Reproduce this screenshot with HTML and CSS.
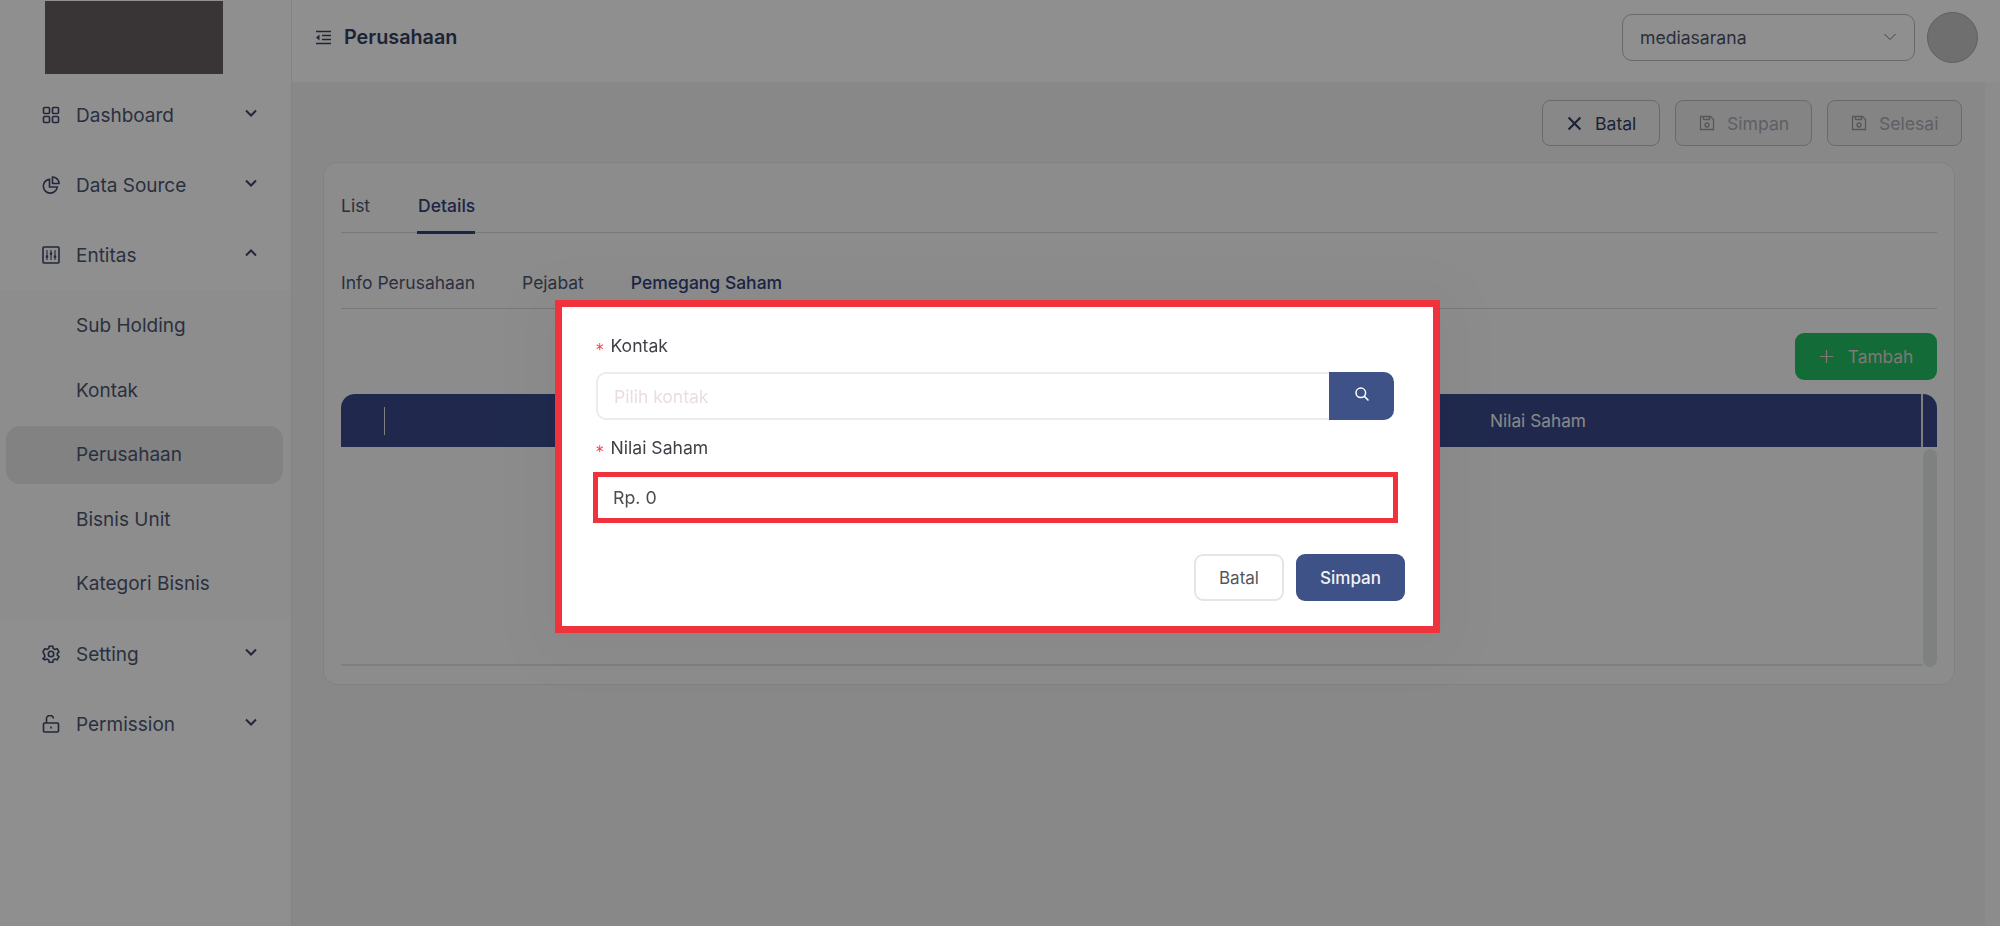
FILE: index.html
```html
<!DOCTYPE html>
<html lang="en">
<head>
  <meta charset="UTF-8" />
  <meta name="viewport" content="width=device-width, initial-scale=1.0" />
  <title>Perusahaan</title>
  <link rel="stylesheet" href="styles.css">
</head>
<body>
  <div class="app">
    <!-- Sidebar -->
    <aside class="sidebar">
      <div class="logo-wrap"><div class="logo"></div></div>
      <nav>
        <div class="nav-item">
          <svg class="nav-icon" viewBox="0 0 18 18"><rect x="1.500" y="1.500" width="6" height="6" rx="1"/><rect x="10.500" y="1.500" width="6" height="6" rx="1"/><rect x="1.500" y="10.500" width="6" height="6" rx="1"/><rect x="10.500" y="10.500" width="6" height="6" rx="1"/></svg>
          <span class="nav-label">Dashboard</span>
          <svg class="chev" viewBox="0 0 14 10"><path d="M2 2.500l5 5 5-5"/></svg>
        </div>
        <div class="nav-item">
          <svg class="nav-icon" viewBox="0 0 18 18"><path d="M7.500 3.200a7 7 0 1 0 7.800 7.800H7.500z"/><path d="M10.500 1a6.500 6.500 0 0 1 6.500 6.500h-6.500z"/></svg>
          <span class="nav-label">Data Source</span>
          <svg class="chev" viewBox="0 0 14 10"><path d="M2 2.500l5 5 5-5"/></svg>
        </div>
        <div class="nav-item">
          <svg class="nav-icon" viewBox="0 0 18 18"><rect x="1" y="1" width="16" height="16" rx="1"/><path class="thin" d="M5 4v10M9 4v10M13 4v10"/><path class="knob" d="M3.800 9.500h2.400v2.200H3.800zM7.800 6.500h2.400v2.200H7.800zM11.800 9.500h2.400v2.200h-2.400z"/></svg>
          <span class="nav-label">Entitas</span>
          <svg class="chev" viewBox="0 0 14 10"><path d="M2 7.500l5-5 5 5"/></svg>
        </div>
        <div class="submenu">
          <div class="sub-item">Sub Holding</div>
          <div class="sub-item">Kontak</div>
          <div class="sub-item active">Perusahaan</div>
          <div class="sub-item">Bisnis Unit</div>
          <div class="sub-item">Kategori Bisnis</div>
        </div>
        <div class="nav-item">
          <svg class="nav-icon" viewBox="0 0 18 18"><path d="M7.200 1.200h3.600l.5 2.200 1.700 1 2.200-.7 1.800 3.100-1.700 1.500v1.900l1.700 1.500-1.800 3.100-2.200-.7-1.700 1-.5 2.200H7.200l-.5-2.200-1.700-1-2.200.7L1 13.700l1.700-1.500v-1.900L1 6.800l1.800-3.100 2.200.7 1.700-1z"/><circle cx="9" cy="9" r="2.700"/></svg>
          <span class="nav-label">Setting</span>
          <svg class="chev" viewBox="0 0 14 10"><path d="M2 2.500l5 5 5-5"/></svg>
        </div>
        <div class="nav-item">
          <svg class="nav-icon" viewBox="0 0 18 18"><rect x="1.500" y="8" width="15" height="9" rx="1"/><path d="M4.500 8V4.500a3.500 3.500 0 0 1 7-1"/><path d="M9 11.500v2"/></svg>
          <span class="nav-label">Permission</span>
          <svg class="chev" viewBox="0 0 14 10"><path d="M2 2.500l5 5 5-5"/></svg>
        </div>
      </nav>
    </aside>

    <div class="content">
      <!-- Top bar -->
      <header class="topbar">
        <svg class="menu-icon" viewBox="0 0 17 15"><path d="M1 1.500h15M7 5.500h9M7 9.500h9M1 13.500h15"/><path class="solid" d="M4.500 4.500v6L1 7.500z"/></svg>
        <h1>Perusahaan</h1>
        <div class="company-select">
          <span>mediasarana</span>
          <svg viewBox="0 0 14 10"><path d="M1.500 2l5.500 5.500L12.500 2"/></svg>
        </div>
        <div class="avatar"></div>
      </header>

      <div class="main-scroll">
        <main class="main">
          <div class="toolbar">
            <button class="btn btn-cancel">
              <svg viewBox="0 0 14 14"><path d="M1.500 1.500l11 11M12.500 1.500l-11 11"/></svg>Batal
            </button>
            <button class="btn btn-off">
              <svg viewBox="0 0 16 16"><path d="M1.500 1.500h10l3 3v10h-13z"/><path d="M4.500 1.500v3h6v-3"/><circle cx="8" cy="10" r="2"/></svg>Simpan
            </button>
            <button class="btn btn-off">
              <svg viewBox="0 0 16 16"><path d="M1.500 1.500h10l3 3v10h-13z"/><path d="M4.500 1.500v3h6v-3"/><circle cx="8" cy="10" r="2"/></svg>Selesai
            </button>
          </div>

          <section class="card">
            <div class="tabs main-tabs">
              <span class="tab">List</span>
              <span class="tab current underlined">Details</span>
            </div>
            <div class="tabs sub-tabs">
              <span class="tab">Info Perusahaan</span>
              <span class="tab">Pejabat</span>
              <span class="tab current">Pemegang Saham</span>
            </div>
            <div class="add-row">
              <button class="btn-add">
                <svg viewBox="0 0 16 16"><path d="M8 1v14M1 8h14"/></svg>Tambah
              </button>
            </div>
            <div class="table">
              <div class="table-head">
                <div class="col-check"></div>
                <div class="col-name"></div>
                <div class="col-value">Nilai Saham</div>
                <div class="col-scroll"></div>
              </div>
              <div class="table-body">
                <div class="table-empty"></div>
                <div class="scroll-thumb"></div>
              </div>
            </div>
          </section>
        </main>
        <div class="page-scrollbar"></div>
      </div>
    </div>
  </div>

  <!-- Modal -->
  <div class="overlay">
    <div class="modal">
      <label class="field-label"><span class="req">*</span>Kontak</label>
      <div class="search-group">
        <input class="search-input" type="text" placeholder="Pilih kontak">
        <button class="search-btn">
          <svg viewBox="0 0 16 16"><circle cx="6.800" cy="6.800" r="4.800"/><path d="M10.400 10.400l4.100 4.100"/></svg>
        </button>
      </div>
      <label class="field-label second"><span class="req">*</span>Nilai Saham</label>
      <input class="value-input" type="text" value="Rp. 0">
      <div class="modal-actions">
        <button class="modal-btn">Batal</button>
        <button class="modal-btn primary">Simpan</button>
      </div>
    </div>
  </div>
</body>
</html>
```

FILE: styles.css
```css
* {
  box-sizing: border-box;
}
html, body {
  height: 100%;
}
body {
  margin: 0;
  font-family: Inter, "Liberation Sans", sans-serif;
  color: #4d5672;
  background: #f3f3f3;
  overflow: hidden;
}
button, input {
  font-family: inherit;
}
svg {
  fill: none;
  stroke: currentColor;
  flex: none;
}
.app {
  display: flex;
  height: 926px;
}

/* sidebar */
.sidebar {
  width: 292px;
  flex: none;
  background: #fff;
  border-right: 1px solid #ececec;
}
.logo-wrap {
  height: 80px;
  padding: 1px 0 0 45px;
}
.logo {
  width: 178px;
  height: 73px;
  background: #675f61;
}
.nav-item {
  height: 70px;
  display: flex;
  align-items: center;
  padding: 0 33px 0 42px;
  font-size: 19px;
}
.nav-icon {
  width: 18px;
  height: 18px;
  stroke-width: 1.600;
  color: #3e4767;
}
.nav-icon .thin {
  stroke-width: 1.100;
}
.nav-icon .knob {
  fill: currentColor;
  stroke: none;
}
.nav-label {
  margin-left: 16px;
  flex: 1;
}
.chev {
  width: 14px;
  height: 10px;
  stroke-width: 2;
  margin-top: -5px;
  color: #3e4767;
}
.submenu {
  background: #fcfcfc;
  padding: 7px 8px 5px 6px;
  height: 329px;
}
.sub-item {
  height: 58px;
  line-height: 58px;
  padding-left: 70px;
  margin-bottom: 6.500px;
  font-size: 19px;
  border-radius: 14px;
}
.sub-item.active {
  background: #e6e8e7;
}

/* topbar */
.content {
  flex: 1;
  min-width: 0;
  display: flex;
  flex-direction: column;
}
.topbar {
  height: 82px;
  flex: none;
  display: flex;
  align-items: center;
  background: #fff;
  padding: 0 22px 8px 23px;
  color: #3a4463;
}
.menu-icon {
  width: 17px;
  height: 15px;
  stroke-width: 1.700;
}
.menu-icon .solid {
  fill: currentColor;
  stroke: none;
}
.topbar h1 {
  flex: 1;
  margin: 0 0 0 12px;
  font-size: 19.800px;
  font-weight: 600;
  color: #36405f;
}
.company-select {
  width: 293px;
  height: 47px;
  display: flex;
  align-items: center;
  justify-content: space-between;
  padding: 0 17px;
  border: 1px solid #bcbcbc;
  border-radius: 10px;
  font-size: 17.600px;
  color: #4a5369;
}
.company-select svg {
  width: 14px;
  height: 10px;
  stroke-width: 1;
  color: #777;
}
.avatar {
  width: 51px;
  height: 51px;
  margin-left: 12px;
  border-radius: 50%;
  background: #c6c6c6;
  border: 1px solid #aaa;
}

/* main area */
.main-scroll {
  flex: 1;
  display: flex;
  min-height: 0;
}
.main {
  flex: 1;
  min-width: 0;
  background: #f3f3f3;
  padding: 18px 23px 0 31px;
}
.page-scrollbar {
  width: 15px;
  flex: none;
  background: #f9f9f9;
}
.toolbar {
  display: flex;
  justify-content: flex-end;
  gap: 15px;
  height: 46px;
}
.btn {
  height: 46px;
  display: flex;
  align-items: center;
  padding: 0 22px;
  border-radius: 8px;
  font-size: 17.600px;
  background: transparent;
  border: 1px solid #bdbdbd;
}
.btn svg {
  width: 16px;
  height: 16px;
  margin-right: 12px;
}
.btn-cancel {
  color: #333d5e;
  width: 118px;
  padding-left: 24px;
}
.btn-cancel svg {
  width: 15px;
  height: 15px;
  stroke-width: 2;
  margin-right: 13px;
}
.btn-off {
  width: 137px;
  color: #a7aab4;
  background: #ececec;
  padding: 0 20px 0 23px;
}
.btn-off + .btn-off {
  width: 135px;
}
.btn-off svg {
  color: #9b9b9b;
  stroke-width: 1.300;
}

.card {
  margin: 16px 7px 0 0;
  height: 523px;
  padding: 0 17px;
  background: #fafafa;
  border: 1px solid #e6e6e6;
  border-radius: 14px;
}
.tabs {
  display: flex;
  gap: 47px;
  height: 70px;
  padding-top: 31px;
  border-bottom: 1px solid #d6d6d6;
  font-size: 17.500px;
}
.main-tabs {
  gap: 48px;
}
.tab {
  position: relative;
  line-height: 24px;
}
.tab.current {
  font-weight: 500;
  color: #34427a;
}
.tab.underlined::after {
  content: "";
  position: absolute;
  left: -1px;
  right: 0;
  top: 37px;
  height: 3px;
  background: #34427a;
}
.sub-tabs {
  height: 76px;
  padding-top: 38px;
}
.add-row {
  display: flex;
  justify-content: flex-end;
  padding-top: 24px;
}
.btn-add {
  width: 142px;
  height: 47px;
  display: flex;
  align-items: center;
  justify-content: center;
  border: 0;
  border-radius: 9px;
  background: #22bf62;
  color: #e6d4d2;
  font-size: 17.300px;
}
.btn-add svg {
  width: 15px;
  height: 15px;
  margin-right: 14px;
  stroke-width: 1.300;
}
.table {
  margin-top: 14px;
}
.table-head {
  height: 53px;
  display: flex;
  align-items: center;
  background: #394a8a;
  border-radius: 14px 14px 0 0;
  color: #f3f3f3;
  font-size: 17.300px;
}
.col-check {
  width: 44px;
  height: 28px;
  border-right: 1px solid #e3e3e3;
  flex: none;
}
.col-name {
  width: 1105px;
  flex: none;
}
.col-value {
  flex: 1;
  height: 100%;
  line-height: 53px;
  border-right: 2px solid #e3e3e3;
}
.col-scroll {
  width: 14px;
  flex: none;
}
.table-body {
  display: flex;
  height: 220px;
}
.table-empty {
  flex: 1;
  border-bottom: 2px solid #e2e2e2;
  margin-bottom: 1px;
}
.scroll-thumb {
  width: 14px;
  margin-top: 2px;
  border-radius: 7px;
  background: #e3e6e5;
}

/* modal */
.overlay {
  position: fixed;
  inset: 0;
  display: flex;
  align-items: center;
  justify-content: center;
  padding: 7px 5px 0 0;
  background: rgba(0, 0, 0, 0.44);
}
.modal {
  width: 885px;
  height: 333px;
  padding: 28px 36px 0 34px;
  background: #fff;
  border: 7px solid #f0323c;
  box-shadow: 0 8px 60px 30px rgba(0, 0, 0, 0.03);
  color: #3f3f46;
}
.field-label {
  display: block;
  font-size: 17.600px;
  line-height: 22px;
}
.field-label.second {
  margin-top: 17px;
}
.req {
  color: #f0323c;
  margin-right: 7px;
  font-family: "DejaVu Sans", sans-serif;
  font-size: 15px;
  vertical-align: -3px;
  line-height: 1;
}
.search-group {
  display: flex;
  height: 48px;
  width: 798px;
  margin-top: 14px;
}
.search-input {
  flex: 1;
  min-width: 0;
  padding: 0 16px;
  border: 2px solid #ececee;
  border-right: 0;
  border-radius: 10px 0 0 10px;
  font-size: 17.500px;
  outline: none;
}
.search-input::placeholder {
  color: #eadde1;
}
.search-btn {
  width: 65px;
  border: 0;
  border-radius: 0 10px 10px 0;
  background: #3e5288;
  color: #fff;
  display: flex;
  align-items: center;
  justify-content: center;
  padding: 0;
}
.search-btn svg {
  width: 16px;
  height: 16px;
  stroke-width: 1.500;
  margin-top: -5px;
}
.value-input {
  display: block;
  width: 805px;
  height: 51px;
  margin: 12px 0 0 -3px;
  padding: 0 15px;
  border: 5px solid #f0323c;
  font-size: 17.800px;
  color: #4c4c52;
  outline: none;
}
.modal-actions {
  display: flex;
  justify-content: flex-end;
  gap: 12px;
  margin: 31px -8px 0 0;
}
.modal-btn {
  width: 90px;
  height: 47px;
  border: 2px solid #e8e4e6;
  border-radius: 9px;
  background: #fff;
  color: #55555c;
  font-size: 17px;
}
.modal-btn.primary {
  width: 109px;
  border: 0;
  background: #3e5288;
  color: #f3f3f3;
  font-weight: 500;
}
```
